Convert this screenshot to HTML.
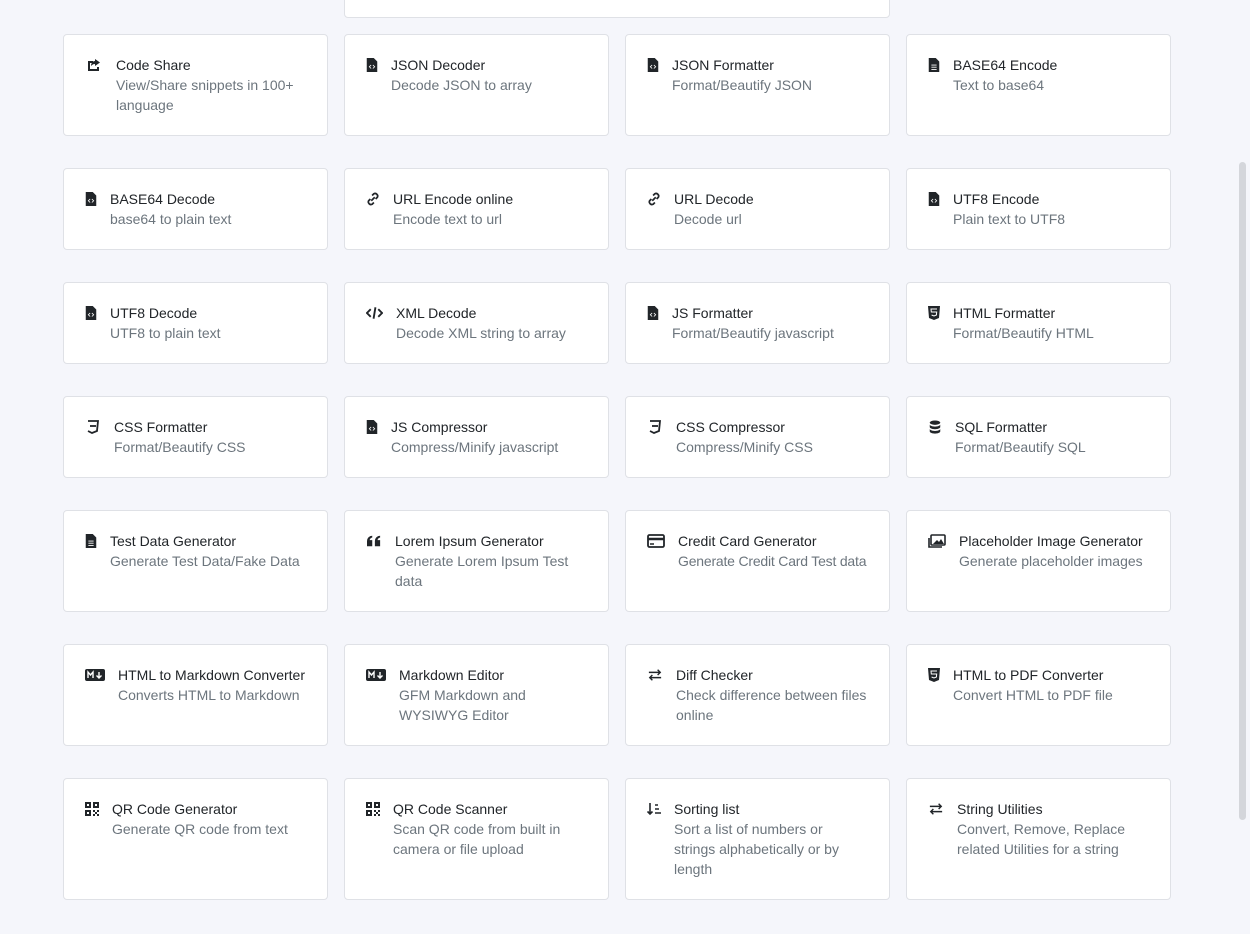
<!DOCTYPE html>
<html><head><meta charset="utf-8"><style>
html,body{margin:0;padding:0}
body{width:1250px;height:934px;background:#f5f6fb;font-family:"Liberation Sans",sans-serif;position:relative;overflow:hidden}
.top{position:absolute;left:344px;top:-10px;width:544px;height:26px;background:#fff;border:1px solid #dfe1e6;border-radius:4px}
.grid{position:absolute;left:63px;top:34px;width:1108px;display:grid;grid-template-columns:repeat(4,265px);grid-template-rows:102px 82px 82px 82px 102px 102px 122px;column-gap:16px;row-gap:32px}
.c{box-sizing:border-box;background:#fff;border:1px solid #dfe1e6;border-radius:4px;padding:20px 20px 20px 20px;display:flex;font-size:14px;line-height:20px;white-space:nowrap}
.i{width:14px;height:20px;margin-right:12px;flex:none;display:flex;align-items:center;justify-content:center}
.i svg{width:14px;height:14px}
.t{color:#212529}
.d{color:#6c757d}
.sb{position:absolute;left:1239px;top:162px;width:7px;height:658px;background:#d4d6db;border-radius:4px}
</style></head><body>
<div class="top"></div>
<div class="sb"></div>
<div class="grid">
<div class="c"><div class="i" style="width:20px"><svg viewBox="0 0 16 16" style="width:16px;height:16px"><path d="M2 4h5v2H4v6h7v-2h2v4H2z" fill="#212529"/><path d="M9 2l5 3.5L9 9V7c-2 0-3 1-4 2 0-3 2-5 4-5z" fill="#212529"/></svg></div><div><div class="t">Code Share</div><div class="d">View/Share snippets in 100+<br>language</div></div></div>
<div class="c"><div class="i"><svg viewBox="0 0 12 16"><path d="M0 0h8l4 4v12H0z" fill="#212529"/><path d="M5 8l-2 2 2 2M7 8l2 2-2 2" stroke="#fff" fill="none"/></svg></div><div><div class="t">JSON Decoder</div><div class="d">Decode JSON to array</div></div></div>
<div class="c"><div class="i"><svg viewBox="0 0 12 16"><path d="M0 0h8l4 4v12H0z" fill="#212529"/><path d="M5 8l-2 2 2 2M7 8l2 2-2 2" stroke="#fff" fill="none"/></svg></div><div><div class="t">JSON Formatter</div><div class="d">Format/Beautify JSON</div></div></div>
<div class="c"><div class="i"><svg viewBox="0 0 12 16"><path d="M0 0h8l4 4v12H0z" fill="#212529"/><path d="M3 8h6M3 10.5h6M3 13h6" stroke="#fff"/></svg></div><div><div class="t">BASE64 Encode</div><div class="d">Text to base64</div></div></div>

<div class="c"><div class="i"><svg viewBox="0 0 12 16"><path d="M0 0h8l4 4v12H0z" fill="#212529"/><path d="M5 8l-2 2 2 2M7 8l2 2-2 2" stroke="#fff" fill="none"/></svg></div><div><div class="t">BASE64 Decode</div><div class="d">base64 to plain text</div></div></div>
<div class="c"><div class="i" style="width:16px"><svg viewBox="0 0 16 16"><path d="M7 4l2-2a3 3 0 014 4l-2 2M9 12l-2 2a3 3 0 01-4-4l2-2M6 10l4-4" stroke="#212529" stroke-width="2" fill="none"/></svg></div><div><div class="t">URL Encode online</div><div class="d">Encode text to url</div></div></div>
<div class="c"><div class="i" style="width:16px"><svg viewBox="0 0 16 16"><path d="M7 4l2-2a3 3 0 014 4l-2 2M9 12l-2 2a3 3 0 01-4-4l2-2M6 10l4-4" stroke="#212529" stroke-width="2" fill="none"/></svg></div><div><div class="t">URL Decode</div><div class="d">Decode url</div></div></div>
<div class="c"><div class="i"><svg viewBox="0 0 12 16"><path d="M0 0h8l4 4v12H0z" fill="#212529"/><path d="M5 8l-2 2 2 2M7 8l2 2-2 2" stroke="#fff" fill="none"/></svg></div><div><div class="t">UTF8 Encode</div><div class="d">Plain text to UTF8</div></div></div>

<div class="c"><div class="i"><svg viewBox="0 0 12 16"><path d="M0 0h8l4 4v12H0z" fill="#212529"/><path d="M5 8l-2 2 2 2M7 8l2 2-2 2" stroke="#fff" fill="none"/></svg></div><div><div class="t">UTF8 Decode</div><div class="d">UTF8 to plain text</div></div></div>
<div class="c"><div class="i" style="width:19px"><svg viewBox="0 0 18 14" style="width:17px"><path d="M5 3L1 7l4 4M13 3l4 4-4 4M10 1L8 13" stroke="#212529" stroke-width="2" fill="none"/></svg></div><div><div class="t">XML Decode</div><div class="d">Decode XML string to array</div></div></div>
<div class="c"><div class="i"><svg viewBox="0 0 12 16"><path d="M0 0h8l4 4v12H0z" fill="#212529"/><path d="M5 8l-2 2 2 2M7 8l2 2-2 2" stroke="#fff" fill="none"/></svg></div><div><div class="t">JS Formatter</div><div class="d">Format/Beautify javascript</div></div></div>
<div class="c"><div class="i"><svg viewBox="0 0 12 14"><path d="M0 0h12l-1 12-5 2-5-2z" fill="#212529"/><path d="M9 3H3l.3 3h5.4l-.3 3L6 10l-2.4-1" stroke="#fff" fill="none"/></svg></div><div><div class="t">HTML Formatter</div><div class="d">Format/Beautify HTML</div></div></div>

<div class="c"><div class="i" style="width:18px"><svg viewBox="0 0 12 14"><path d="M1 1h10l-1 10-5 2-4-2" stroke="#212529" stroke-width="1.8" fill="none"/><path d="M3 6h6" stroke="#212529" stroke-width="1.8"/></svg></div><div><div class="t">CSS Formatter</div><div class="d">Format/Beautify CSS</div></div></div>
<div class="c"><div class="i"><svg viewBox="0 0 12 16"><path d="M0 0h8l4 4v12H0z" fill="#212529"/><path d="M5 8l-2 2 2 2M7 8l2 2-2 2" stroke="#fff" fill="none"/></svg></div><div><div class="t">JS Compressor</div><div class="d">Compress/Minify javascript</div></div></div>
<div class="c"><div class="i" style="width:18px"><svg viewBox="0 0 12 14"><path d="M1 1h10l-1 10-5 2-4-2" stroke="#212529" stroke-width="1.8" fill="none"/><path d="M3 6h6" stroke="#212529" stroke-width="1.8"/></svg></div><div><div class="t">CSS Compressor</div><div class="d">Compress/Minify CSS</div></div></div>
<div class="c"><div class="i" style="width:16px"><svg viewBox="0 0 14 16"><ellipse cx="7" cy="3" rx="6" ry="2.5" fill="#212529"/><path d="M1 5v3c0 1.4 2.7 2.5 6 2.5s6-1.1 6-2.5V5c0 1.4-2.7 2.5-6 2.5S1 6.4 1 5zM1 10v3c0 1.4 2.7 2.5 6 2.5s6-1.1 6-2.5v-3c0 1.4-2.7 2.5-6 2.5S1 11.4 1 10z" fill="#212529"/></svg></div><div><div class="t">SQL Formatter</div><div class="d">Format/Beautify SQL</div></div></div>

<div class="c"><div class="i"><svg viewBox="0 0 12 16"><path d="M0 0h8l4 4v12H0z" fill="#212529"/><path d="M3 8h6M3 10.5h6M3 13h6" stroke="#fff"/></svg></div><div><div class="t">Test Data Generator</div><div class="d">Generate Test Data/Fake Data</div></div></div>
<div class="c"><div class="i" style="width:18px"><svg viewBox="0 0 16 14"><path d="M0 7a6 6 0 016-6v2a4 4 0 00-3 3h3v7H0zM9 7a6 6 0 016-6v2a4 4 0 00-3 3h3v7H9z" fill="#212529"/></svg></div><div><div class="t">Lorem Ipsum Generator</div><div class="d">Generate Lorem Ipsum Test<br>data</div></div></div>
<div class="c"><div class="i" style="width:20px"><svg viewBox="0 0 18 14" style="width:18px"><rect x="1" y="1" width="16" height="12" rx="1.5" fill="none" stroke="#212529" stroke-width="1.8"/><path d="M1 5h16" stroke="#212529" stroke-width="2.5"/><path d="M3 10h4" stroke="#212529" stroke-width="1.5"/></svg></div><div><div class="t">Credit Card Generator</div><div class="d" style="letter-spacing:-0.2px">Generate Credit Card Test data</div></div></div>
<div class="c"><div class="i" style="width:20px"><svg viewBox="0 0 18 14" style="width:18px"><rect x="3" y="1" width="14" height="10" rx="1" fill="none" stroke="#212529" stroke-width="1.6"/><path d="M1 4v9h13" stroke="#212529" stroke-width="1.6" fill="none"/><path d="M5 10l4-4 2 2 2-3 3 5z" fill="#212529"/></svg></div><div><div class="t">Placeholder Image Generator</div><div class="d">Generate placeholder images</div></div></div>

<div class="c"><div class="i" style="width:22px"><svg viewBox="0 0 20 12" style="width:20px"><rect x="0" y="0" width="20" height="12" rx="2" fill="#212529"/><path d="M3 9V3l2.5 3L8 3v6M14 3v6M11.5 6.5L14 9l2.5-2.5" stroke="#fff" stroke-width="1.4" fill="none"/></svg></div><div><div class="t">HTML to Markdown Converter</div><div class="d">Converts HTML to Markdown</div></div></div>
<div class="c"><div class="i" style="width:22px"><svg viewBox="0 0 20 12" style="width:20px"><rect x="0" y="0" width="20" height="12" rx="2" fill="#212529"/><path d="M3 9V3l2.5 3L8 3v6M14 3v6M11.5 6.5L14 9l2.5-2.5" stroke="#fff" stroke-width="1.4" fill="none"/></svg></div><div><div class="t">Markdown Editor</div><div class="d">GFM Markdown and<br>WYSIWYG Editor</div></div></div>
<div class="c"><div class="i" style="width:18px"><svg viewBox="0 0 16 14"><path d="M1 4h13M11 1l3 3-3 3M15 10H2M5 7l-3 3 3 3" stroke="#212529" stroke-width="1.6" fill="none"/></svg></div><div><div class="t">Diff Checker</div><div class="d">Check difference between files<br>online</div></div></div>
<div class="c"><div class="i"><svg viewBox="0 0 12 14"><path d="M0 0h12l-1 12-5 2-5-2z" fill="#212529"/><path d="M9 3H3l.3 3h5.4l-.3 3L6 10l-2.4-1" stroke="#fff" fill="none"/></svg></div><div><div class="t">HTML to PDF Converter</div><div class="d">Convert HTML to PDF file</div></div></div>

<div class="c"><div class="i" style="width:16px"><svg viewBox="0 0 14 14"><path d="M0 0h6v6H0zM8 0h6v6H8zM0 8h6v6H0z" fill="#212529"/><path d="M2 2h2v2H2zM10 2h2v2h-2zM2 10h2v2H2z" fill="#fff"/><path d="M8 8h2v2H8zM12 8h2v2h-2zM10 10h2v2h-2zM8 12h2v2H8zM12 12h2v2h-2z" fill="#212529"/></svg></div><div><div class="t">QR Code Generator</div><div class="d">Generate QR code from text</div></div></div>
<div class="c"><div class="i" style="width:16px"><svg viewBox="0 0 14 14"><path d="M0 0h6v6H0zM8 0h6v6H8zM0 8h6v6H0z" fill="#212529"/><path d="M2 2h2v2H2zM10 2h2v2h-2zM2 10h2v2H2z" fill="#fff"/><path d="M8 8h2v2H8zM12 8h2v2h-2zM10 10h2v2h-2zM8 12h2v2H8zM12 12h2v2h-2z" fill="#212529"/></svg></div><div><div class="t">QR Code Scanner</div><div class="d">Scan QR code from built in<br>camera or file upload</div></div></div>
<div class="c"><div class="i" style="width:16px"><svg viewBox="0 0 14 14"><path d="M3 1v11M0.5 9.5L3 12l2.5-2.5" stroke="#212529" stroke-width="1.6" fill="none"/><path d="M8 3h3M8 7h4M8 11h6" stroke="#212529" stroke-width="1.6"/></svg></div><div><div class="t">Sorting list</div><div class="d">Sort a list of numbers or<br>strings alphabetically or by<br>length</div></div></div>
<div class="c"><div class="i" style="width:18px"><svg viewBox="0 0 16 14"><path d="M1 4h13M11 1l3 3-3 3M15 10H2M5 7l-3 3 3 3" stroke="#212529" stroke-width="1.6" fill="none"/></svg></div><div><div class="t">String Utilities</div><div class="d">Convert, Remove, Replace<br>related Utilities for a string</div></div></div>
</div>
</body></html>
